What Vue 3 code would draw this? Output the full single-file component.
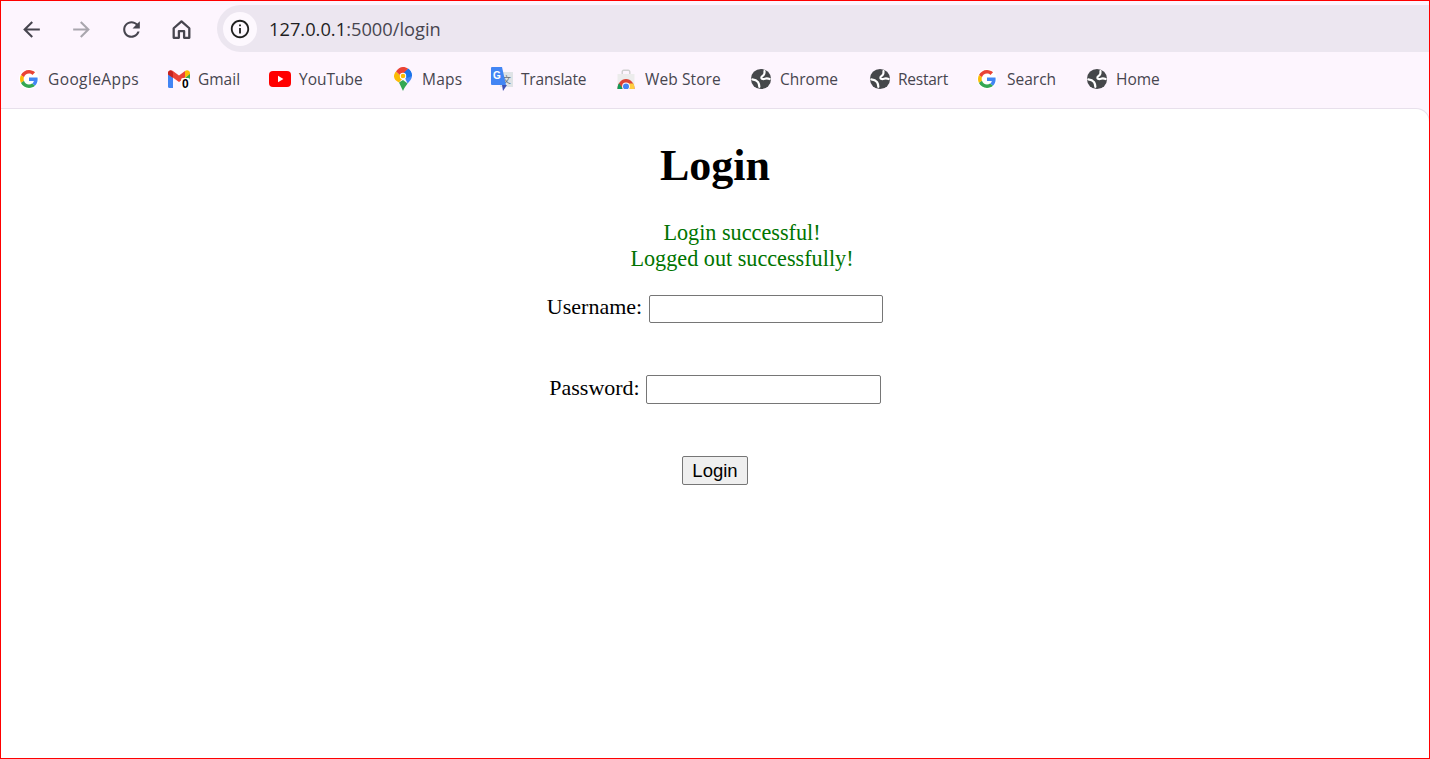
<script setup>
const items = [
  { label: 'GoogleApps', icon: 'g', w: 148, fav: 28, ls: 0.4 },
  { label: 'Gmail', icon: 'gmail', w: 101, fav: 30, ls: 0 },
  { label: 'YouTube', icon: 'yt', w: 124, fav: 30, ls: 0 },
  { label: 'Maps', icon: 'maps', w: 98, fav: 29, ls: 0.2 },
  { label: 'Translate', icon: 'tr', w: 125, fav: 30, ls: -0.2 },
  { label: 'Web Store', icon: 'ws', w: 134, fav: 29, ls: 0.1 },
  { label: 'Chrome', icon: 'globe', w: 119, fav: 30, ls: 0 },
  { label: 'Restart', icon: 'globe', w: 109, fav: 29, ls: -0.25 },
  { label: 'Search', icon: 'g', w: 108, fav: 29, ls: 0 },
  { label: 'Home', icon: 'globe', w: 90, fav: 30, ls: 0 },
]
</script>

<template>
  <div class="window">
    <header class="toolbar">
      <nav class="nav">
        <svg class="nav-icon" viewBox="0 0 24 24"><path d="M20 11H7.83l5.59-5.59L12 4l-8 8 8 8 1.41-1.41L7.83 13H20v-2z" /></svg>
        <svg class="nav-icon off" viewBox="0 0 24 24"><path d="M4 11h12.17l-5.59-5.59L12 4l8 8-8 8-1.41-1.41L16.17 13H4v-2z" /></svg>
        <svg class="nav-icon" viewBox="0 0 24 24"><path d="M17.65 6.35C16.2 4.9 14.21 4 12 4c-4.42 0-7.99 3.58-7.99 8s3.57 8 7.99 8c3.73 0 6.84-2.55 7.73-6h-2.08c-.82 2.33-3.04 4-5.65 4-3.31 0-6-2.69-6-6s2.69-6 6-6c1.66 0 3.14.69 4.22 1.78L13 11h7V4l-2.35 2.35z" /></svg>
        <svg class="nav-icon home" viewBox="0 0 24 24"><path d="M4.500 10.800 12 4.200l7.500 6.600V20h-5v-6.500h-5V20h-5z" /></svg>
      </nav>
      <div class="omnibox">
        <span class="info">
          <svg viewBox="0 0 24 24" width="22" height="22"><path fill="#1f1f1f" d="M11 7h2v2h-2zm0 4h2v6h-2zm1-9C6.48 2 2 6.48 2 12s4.48 10 10 10 10-4.48 10-10S17.52 2 12 2zm0 18c-4.41 0-8-3.59-8-8s3.59-8 8-8 8 3.59 8 8-3.59 8-8 8z" /></svg>
        </span>
        <span class="url">127.0.0.1<span class="port">:5000/login</span></span>
      </div>
    </header>

    <div class="bookmarks">
      <a
        v-for="item in items"
        :key="item.label"
        class="bookmark"
        :style="{ width: item.w + 'px' }"
      >
        <span class="fav" :style="{ width: item.fav + 'px' }">
          <svg v-if="item.icon === 'g'" class="g" viewBox="0 0 48 48">
            <circle cx="24" cy="24" r="27" fill="#fff" />
            <path fill="#EA4335" d="M24 9.5c3.54 0 6.71 1.22 9.21 3.6l6.85-6.85C35.9 2.38 30.47 0 24 0 14.62 0 6.51 5.38 2.56 13.22l7.98 6.19C12.43 13.72 17.74 9.5 24 9.5z" />
            <path fill="#4285F4" d="M46.98 24.55c0-1.57-.15-3.09-.38-4.55H24v9.02h12.94c-.58 2.96-2.26 5.48-4.78 7.18l7.73 6c4.51-4.18 7.09-10.36 7.09-17.65z" />
            <path fill="#FBBC05" d="M10.53 28.59c-.48-1.45-.76-2.99-.76-4.59s.27-3.14.76-4.59l-7.98-6.19C.92 16.46 0 20.12 0 24c0 3.88.92 7.54 2.56 10.78l7.97-6.19z" />
            <path fill="#34A853" d="M24 48c6.48 0 11.93-2.13 15.89-5.81l-7.73-6c-2.15 1.45-4.92 2.3-8.16 2.3-6.26 0-11.57-4.22-13.47-9.91l-7.98 6.19C6.51 42.62 14.62 48 24 48z" />
          </svg>

          <template v-else-if="item.icon === 'gmail'">
            <svg class="gmail" viewBox="0 0 22 18">
              <path fill="#4285F4" d="M0 3v13.5A1.5 1.5 0 0 0 1.5 18H5V8z" />
              <path fill="#34A853" d="M17 8v10h3.5a1.5 1.5 0 0 0 1.5-1.5V3z" />
              <path fill="#EA4335" d="M0 3.2C0 .8 2.6-.7 4.6.8L11 5.6 17 1v6.4l-6 4.6L0 4z" />
              <path fill="#C5221F" d="M0 3v1.5L5 8V2.2L3.8.9C2 0 0 .9 0 3z" />
              <path fill="#FBBC04" d="M17 1.1c2-1.6 5-.4 5 2.1V4l-5 4z" />
            </svg>
            <span class="badge">0</span>
          </template>

          <svg v-else-if="item.icon === 'yt'" class="yt" viewBox="0 0 22 16">
            <rect width="22" height="16" rx="4" fill="#f00" />
            <path d="M9 4.8 14.4 8 9 11.2z" fill="#fff" />
          </svg>

          <svg v-else-if="item.icon === 'maps'" class="maps" viewBox="0 0 18 24">
            <path fill="#34A853" d="M5 15.5 9 24c1-3 3-5.5 4.6-7.6L9 13z" />
            <path fill="#FBBC04" d="M2 4.5C.8 5.8 0 7.4 0 9.2c0 2.8 2.1 4.9 5 6.3l4-4.5z" />
            <path fill="#4285F4" d="M14 1.5 9 7l4.6 9.4C15.6 14 18 12 18 9c0-3-1.6-6-4-7.5z" />
            <path fill="#1A73E8" d="M9.5 5 14.3 1.7C16.6 3.2 18 6 18 9l-5 2z" />
            <path fill="#EA4335" d="M2 4.500 7 9l7-7.500C12.600.6 10.900 0 9 0 6.300 0 3.600 1.800 2 4.500z" />
            <circle cx="9" cy="9" r="3.200" fill="#fff" />
            <circle cx="9" cy="9" r="2.300" fill="#FBBC04" />
          </svg>

          <svg v-else-if="item.icon === 'tr'" class="tr" viewBox="0 0 22 24">
            <rect x="9" y="5" width="13" height="15" fill="#dfe3e6" />
            <text x="15.500" y="16" class="tr-zh">文</text>
            <path fill="#3f51b5" d="M11 18h5l-4 6z" />
            <path fill="#4285f4" d="M1 0h10l4 18H1a1 1 0 0 1-1-1V1a1 1 0 0 1 1-1z" />
            <text x="6" y="12" class="tr-g">G</text>
          </svg>

          <svg v-else-if="item.icon === 'ws'" class="ws" viewBox="0 0 20 20">
            <path d="M5.500 5V3c0-1.500 1-2.500 2.200-2.500h4.600c1.200 0 2.200 1 2.200 2.500v2h-1.400V3c0-.6-.4-1.100-.9-1.100H7.800c-.5 0-.9.5-.9 1.100v2z" fill="#d0d0d0" />
            <path d="M1.500 5h17v15h-17z" fill="#ececec" />
            <path d="M1.500 20c0-5.500 3.500-10 8.500-10s8.500 4.500 8.500 10z" fill="#db4437" />
            <path d="M1.500 20c0-2.200.5-4.200 1.500-5.800L7 20z" fill="#0f9d58" />
            <path d="M12.500 14.500h5c.6 1.500 1 3.500 1 5.500h-5z" fill="#ffcd40" />
            <circle cx="10" cy="17.500" r="3.900" fill="#fff" />
            <circle cx="10" cy="17.500" r="3" fill="#4285f4" />
          </svg>

          <svg v-else class="globe" viewBox="0 0 24 24">
            <circle cx="12" cy="12" r="11" fill="#45474a" />
            <path fill="none" stroke="#fff" stroke-width="2.400" stroke-linecap="round" d="M2.500 12.500c2.500.2 4.800 1 6.300 3 1 1.500 1.200 3 1.400 5" />
            <path fill="none" stroke="#fff" stroke-width="2.400" stroke-linecap="round" d="M21.500 12c-2-.7-3.800-.8-5.300-.2-1.700.6-3.500.3-3.800-1-.3-1.300 1-1.800 2.400-3 1-.9 1.200-2.300 1-4.300" />
          </svg>
        </span>
        <span class="label" :style="{ letterSpacing: item.ls + 'px' }">{{ item.label }}</span>
      </a>
    </div>

    <main class="page">
      <h1 class="title">Login</h1>
      <ul class="flashes">
        <li>Login successful!</li>
        <li>Logged out successfully!</li>
      </ul>
      <form class="form" @submit.prevent>
        <div class="row">
          <label for="username">Username:</label>
          <input id="username" type="text" class="field first" />
        </div>
        <div class="row">
          <label for="password">Password:</label>
          <input id="password" type="password" class="field second" />
        </div>
        <div class="actions">
          <button type="submit" class="submit">Login</button>
        </div>
      </form>
    </main>
  </div>
</template>

<style>
html, body { margin: 0; padding: 0; background: #fff; overflow: hidden; }
</style>

<style scoped>
.window {
  box-sizing: border-box;
  height: 759px;
  border: 1px solid #f00;
  display: flex;
  flex-direction: column;
  background: #fdf5fe;
  overflow: hidden;
}
.toolbar {
  display: flex;
  align-items: flex-start;
  height: 51px;
  padding-top: 4px;
  box-sizing: border-box;
  flex: none;
}
.nav {
  display: flex;
  gap: 25px;
  padding: 12px 0 0 18px;
  width: 216px;
  box-sizing: border-box;
  flex: none;
}
.nav-icon { width: 25px; height: 25px; fill: #47454f; flex: none; }
.nav-icon.off { fill: #a9a6ae; }
.nav-icon.home { fill: none; stroke: #47454f; stroke-width: 2.200; stroke-linejoin: round; }
.omnibox {
  flex: 1;
  height: 47px;
  background: #ece6f0;
  border-radius: 24px 0 0 24px;
  display: flex;
  align-items: center;
  padding-left: 6px;
}
.info {
  width: 34px;
  height: 34px;
  border-radius: 50%;
  background: #fdf8fe;
  display: flex;
  align-items: center;
  justify-content: center;
  flex: none;
}
.url {
  margin-left: 12px;
  font: 18.300px "Open Sans", sans-serif;
  color: #1f1f23;
}
.port { color: #47454f; }
.bookmarks {
  display: flex;
  align-items: center;
  height: 56px;
  padding: 0 0 3px 19px;
  box-sizing: border-box;
  flex: none;
}
.bookmark {
  display: flex;
  align-items: center;
  flex: none;
  color: #47454f;
  font: 15.500px "Open Sans", sans-serif;
  white-space: nowrap;
}
.fav {
  position: relative;
  height: 24px;
  display: flex;
  align-items: center;
  flex: none;
}
.g { width: 18px; height: 18px; overflow: visible; }
.gmail { width: 22px; height: 18px; }
.yt { width: 22px; height: 16px; }
.maps { width: 18px; height: 24px; margin-left: 1px; }
.tr { width: 22px; height: 24px; }
.ws { width: 20px; height: 20px; }
.globe { width: 22px; height: 22px; }
.badge {
  position: absolute;
  left: 13px;
  top: 11px;
  font: bold 12px/12px "Liberation Sans", sans-serif;
  color: #000;
  background: #fff;
  padding: 0 1px;
  border-radius: 2px;
}
.tr-zh { font: 9px "Noto Sans CJK SC", sans-serif; fill: #6b7278; text-anchor: middle; }
.tr-g { font: bold 10px "Liberation Sans", sans-serif; fill: #fff; text-anchor: middle; }
.page {
  flex: 1;
  background: #fff;
  border-top: 1px solid #e8e0ec;
  border-radius: 0 14px 0 0;
  border-right: 1px solid #e8e0ec;
  margin-right: -1px;
  text-align: center;
  font: 22px "Liberation Serif", serif;
  color: #000;
}
.title {
  margin: 28px 0 0;
  font-size: 44px;
  line-height: 57px;
  font-weight: bold;
}
.flashes {
  list-style: none;
  margin: 26px 0 0;
  padding: 0 0 0 54px;
  color: #007400;
  font-size: 22.200px;
  line-height: 26px;
}
.form { margin-top: 22px; }
.row { height: 81px; }
.field {
  box-sizing: border-box;
  height: 28px;
  padding: 1px 2px;
  border: 1px solid #767676;
  border-radius: 2px;
  background: #fff;
  font: 18px "Liberation Sans", sans-serif;
  margin: 0 0 0 6px;
  vertical-align: baseline;
}
.field.first { width: 234px; margin-left: 7px; }
.field.second { width: 235px; height: 29px; }
.submit {
  box-sizing: border-box;
  width: 66px;
  height: 29px;
  padding: 0;
  border: 1px solid #767676;
  border-radius: 2px;
  background: #efefef;
  color: #000;
  font: 18.500px "Liberation Sans", sans-serif;
}
</style>
